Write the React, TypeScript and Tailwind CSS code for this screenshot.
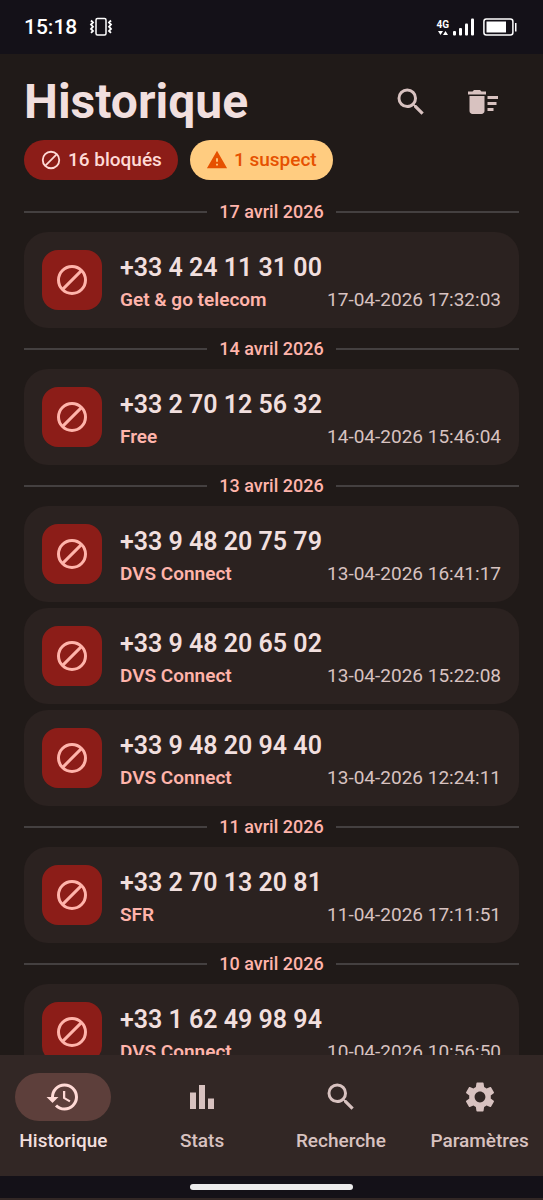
import { useState } from 'react'
import { MdBarChart, MdDeleteSweep, MdHistory, MdSearch, MdSettings, MdWarning } from 'react-icons/md'

const days = [
  {
    label: '17 avril 2026',
    calls: [{ number: '+33 4 24 11 31 00', operator: 'Get & go telecom', date: '17-04-2026 17:32:03' }],
  },
  {
    label: '14 avril 2026',
    calls: [{ number: '+33 2 70 12 56 32', operator: 'Free', date: '14-04-2026 15:46:04' }],
  },
  {
    label: '13 avril 2026',
    calls: [
      { number: '+33 9 48 20 75 79', operator: 'DVS Connect', date: '13-04-2026 16:41:17' },
      { number: '+33 9 48 20 65 02', operator: 'DVS Connect', date: '13-04-2026 15:22:08' },
      { number: '+33 9 48 20 94 40', operator: 'DVS Connect', date: '13-04-2026 12:24:11' },
    ],
  },
  {
    label: '11 avril 2026',
    calls: [{ number: '+33 2 70 13 20 81', operator: 'SFR', date: '11-04-2026 17:11:51' }],
  },
  {
    label: '10 avril 2026',
    calls: [{ number: '+33 1 62 49 98 94', operator: 'DVS Connect', date: '10-04-2026 10:56:50' }],
  },
]

const tabs = [
  { label: 'Historique', icon: MdHistory },
  { label: 'Stats', icon: MdBarChart },
  { label: 'Recherche', icon: MdSearch },
  { label: 'Paramètres', icon: MdSettings },
]

const BlockIcon = ({ className }: { className: string }) => (
  <svg className={className} viewBox="0 0 24 24" fill="none" stroke="currentColor" strokeWidth={2} aria-hidden="true">
    <circle cx="12" cy="12" r="9" />
    <path d="M5.6 18.4L18.4 5.6" />
  </svg>
)

const StatusBar = () => (
  <div className="flex h-[54px] shrink-0 items-center justify-between bg-[#141118] pl-6 pr-[26px] text-white">
    <div className="flex items-center gap-3">
      <span className="text-[21px] font-medium leading-8">15:18</span>
      {/* Vibrate */}
      <svg className="h-5 w-6" viewBox="0 0 24 20" fill="none" stroke="currentColor" aria-hidden="true">
        <rect x="7" y="1.5" width="10" height="16.5" rx="1.5" strokeWidth="1.5" />
        <path d="M2 3.500l2 2-2 2 2 2.200-2 2.200 2 2-2 2M22 3.500l-2 2 2 2-2 2.200 2 2.200-2 2 2 2" strokeWidth="1.800" />
      </svg>
    </div>
    <div className="flex items-center gap-1">
      <div className="flex flex-col items-center">
        <span className="text-[10px] font-bold leading-[11px]">4G</span>
        <svg className="h-1.5 w-2.5" viewBox="0 0 10 6" fill="currentColor" aria-hidden="true">
          <path d="M0 1h5L2.500 5zM5 5h5L7.500 1z" />
        </svg>
      </div>
      <svg className="h-[18px] w-[22px]" viewBox="0 0 22 18" fill="currentColor" aria-hidden="true">
        <rect x="0" y="13" width="3" height="4.500" rx="1" />
        <rect x="6" y="10" width="3" height="7.500" rx="1" />
        <rect x="12" y="5.500" width="3" height="12" rx="1" />
        <rect x="18" y="0.500" width="3" height="17" rx="1" />
      </svg>
      <svg className="ml-1 h-[18px] w-[34px]" viewBox="0 0 34 18" fill="none" aria-hidden="true">
        <rect x="0.900" y="0.900" width="29" height="16.200" rx="2.500" stroke="currentColor" strokeWidth="1.500" />
        <rect x="3.500" y="3.500" width="19.500" height="11" fill="currentColor" />
        <rect x="32" y="5" width="1.500" height="8.500" fill="currentColor" />
      </svg>
    </div>
  </div>
)

const App = () => {
  const [activeTab, setActiveTab] = useState('Historique')

  return (
    <div className="flex h-screen flex-col overflow-hidden bg-[#201a18] font-[Roboto,sans-serif]">
      <StatusBar />

      <header className="shrink-0 px-6 pt-3">
        <div className="flex h-18 items-center">
          <h1 className="flex-1 text-5xl font-bold text-[#f1dfde]">Historique</h1>
          <button type="button" aria-label="Rechercher" className="grid size-18 place-items-center text-[#d8c2c0]">
            <MdSearch className="size-9" />
          </button>
          <button type="button" aria-label="Effacer l'historique" className="grid size-18 place-items-center text-[#d8c2c0]">
            <MdDeleteSweep className="size-9" />
          </button>
        </div>

        <div className="mt-0.5 flex gap-3">
          <div className="flex h-10 items-center gap-1.5 rounded-full bg-[#8c1d18] px-4 text-[19px] font-medium text-[#ffdad6]">
            <BlockIcon className="size-[22px]" />
            16 bloqués
          </div>
          <div className="flex h-10 items-center gap-1.5 rounded-full bg-[#ffcc80] px-4 text-[19px] font-medium text-[#e65100]">
            <MdWarning className="size-[22px]" />
            1 suspect
          </div>
        </div>
      </header>

      <main className="min-h-0 flex-1 overflow-y-auto px-6 pt-[17px] [scrollbar-width:none]">
        <div className="flex flex-col gap-1.5">
          {days.map((day) => (
            <section key={day.label} className="flex flex-col gap-1.5">
              <h2 className="flex h-[29px] items-center gap-3 text-lg font-medium text-[#ffb4ab]">
                <span className="h-0.5 flex-1 bg-[#444040]" />
                {day.label}
                <span className="h-0.5 flex-1 bg-[#444040]" />
              </h2>
              {day.calls.map((call) => (
                <article key={call.date} className="flex items-center gap-[18px] rounded-3xl bg-[#2b2220] px-[18px] py-4">
                  <div className="grid size-15 shrink-0 place-items-center rounded-2xl bg-[#8c1d18] text-[#ffb4ab]">
                    <BlockIcon className="size-9" />
                  </div>
                  <div className="min-w-0 flex-1">
                    <p className="text-[25px]/10 font-semibold text-[#f1dfde]">{call.number}</p>
                    <div className="flex justify-between text-[19px]/6">
                      <span className="font-semibold text-[#ffb4ab]">{call.operator}</span>
                      <time className="text-[#d8c2c0]">{call.date}</time>
                    </div>
                  </div>
                </article>
              ))}
            </section>
          ))}
        </div>
      </main>

      <nav className="grid shrink-0 grid-cols-4 gap-3 bg-[#322725] pb-[23px] pt-[18px]">
        {tabs.map(({ label, icon: Icon }) => {
          const active = label === activeTab
          return (
            <button
              key={label}
              type="button"
              onClick={() => setActiveTab(label)}
              className={`flex flex-col items-center gap-2 text-[19px]/6 font-medium ${active ? 'text-[#f1dfde]' : 'text-[#d8c2c0]'}`}
            >
              <span className={`grid h-12 w-24 place-items-center rounded-full ${active ? 'bg-[#5d3f3b] text-[#ffdad6]' : ''}`}>
                <Icon className="size-9" />
              </span>
              {label}
            </button>
          )
        })}
      </nav>

      {/* Gesture bar */}
      <div className="flex h-6 shrink-0 items-center justify-center border-b-2 border-[#322725] bg-[#141118]">
        <div className="h-1.5 w-[30%] rounded-full bg-[#ececec]" />
      </div>
    </div>
  )
}

export default App
